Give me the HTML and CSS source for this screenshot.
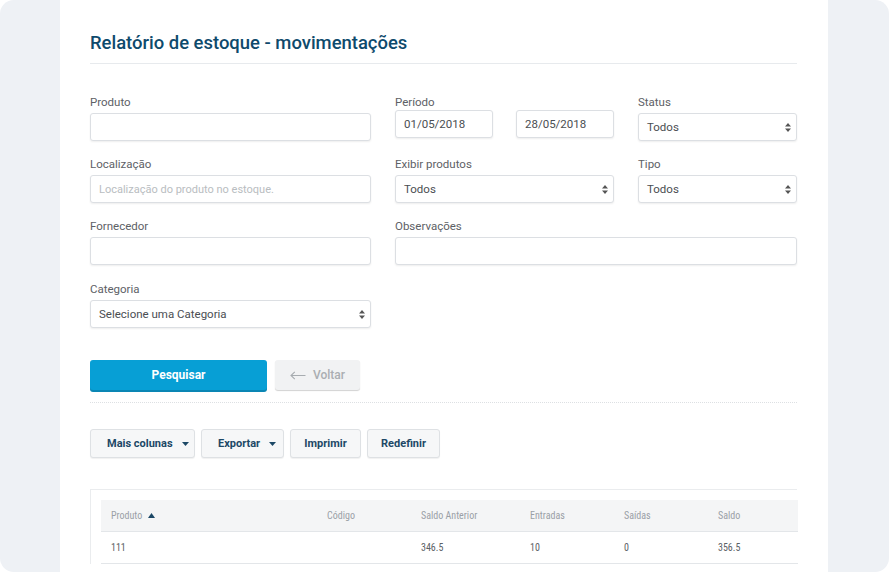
FILE: index.html
```html
<!DOCTYPE html>
<html lang="pt">
<head>
<meta charset="utf-8">
<title>Relatório de estoque - movimentações</title>
<link rel="stylesheet" href="styles.css">
</head>
<body>
<div class="frame">
  <main class="card">
    <h1 class="title">Relatório de estoque - movimentações</h1>
    <hr class="rule">

    <form class="form">
      <div class="field">
        <label class="label">Produto</label>
        <div class="input"></div>
      </div>
      <div class="field">
        <label class="label">Período</label>
        <div class="dates">
          <div class="input date">01/05/2018</div>
          <div class="input date">28/05/2018</div>
        </div>
      </div>
      <div class="field">
        <label class="label">Status</label>
        <div class="input select"><span>Todos</span><svg class="updown" width="6" height="9" viewBox="0 0 6 9"><path d="M3 0L6 3.6H0Z M3 9L0 5.4H6Z" fill="#555"/></svg></div>
      </div>

      <div class="field">
        <label class="label">Localização</label>
        <div class="input placeholder">Localização do produto no estoque.</div>
      </div>
      <div class="field">
        <label class="label">Exibir produtos</label>
        <div class="input select"><span>Todos</span><svg class="updown" width="6" height="9" viewBox="0 0 6 9"><path d="M3 0L6 3.6H0Z M3 9L0 5.4H6Z" fill="#555"/></svg></div>
      </div>
      <div class="field">
        <label class="label">Tipo</label>
        <div class="input select"><span>Todos</span><svg class="updown" width="6" height="9" viewBox="0 0 6 9"><path d="M3 0L6 3.6H0Z M3 9L0 5.4H6Z" fill="#555"/></svg></div>
      </div>

      <div class="field">
        <label class="label">Fornecedor</label>
        <div class="input"></div>
      </div>
      <div class="field wide">
        <label class="label">Observações</label>
        <div class="input"></div>
      </div>

      <div class="field last">
        <label class="label">Categoria</label>
        <div class="input select"><span>Selecione uma Categoria</span><svg class="updown" width="6" height="9" viewBox="0 0 6 9"><path d="M3 0L6 3.6H0Z M3 9L0 5.4H6Z" fill="#555"/></svg></div>
      </div>
    </form>

    <div class="actions">
      <button class="btn-primary" type="button">Pesquisar</button>
      <button class="btn-back" type="button"><svg width="16" height="9" viewBox="0 0 16 9"><path d="M15.5 4.5H1.2 M4.8 0.8L1 4.5L4.8 8.2" fill="none" stroke="#a7acb0" stroke-width="1.1"/></svg><span>Voltar</span></button>
    </div>

    <div class="dotted"></div>

    <div class="toolbar">
      <button class="tool" type="button">Mais colunas <svg class="caret" width="7" height="4" viewBox="0 0 7 4"><path d="M0 0H7L3.5 4Z" fill="#1c4866"/></svg></button>
      <button class="tool" type="button">Exportar <svg class="caret" width="7" height="4" viewBox="0 0 7 4"><path d="M0 0H7L3.5 4Z" fill="#1c4866"/></svg></button>
      <button class="tool" type="button">Imprimir</button>
      <button class="tool" type="button">Redefinir</button>
    </div>

    <div class="table-wrap">
      <table class="table">
        <colgroup>
          <col class="c1"><col class="c2"><col class="c3"><col class="c4"><col class="c5"><col class="c6">
        </colgroup>
        <thead>
          <tr>
            <th>Produto <svg class="sort" width="7" height="5" viewBox="0 0 7 5"><path d="M3.5 0L7 5H0Z" fill="#1c4866"/></svg></th>
            <th>Código</th>
            <th>Saldo Anterior</th>
            <th>Entradas</th>
            <th>Saídas</th>
            <th>Saldo</th>
          </tr>
        </thead>
        <tbody>
          <tr>
            <td>111</td>
            <td></td>
            <td>346.5</td>
            <td>10</td>
            <td>0</td>
            <td>356.5</td>
          </tr>
        </tbody>
      </table>
    </div>
  </main>
</div>
</body>
</html>
```

FILE: styles.css
```css
* { box-sizing: border-box; }

html, body {
  margin: 0;
  padding: 0;
  background: #ffffff;
}

body {
  font-family: Roboto, "Liberation Sans", Arial, sans-serif;
  width: 889px;
  height: 572px;
  overflow: hidden;
}

.frame {
  width: 889px;
  height: 572px;
  background: #eef1f5;
  border-radius: 14px;
  padding: 0 61px 0 60px;
  overflow: hidden;
}

.card {
  background: #ffffff;
  height: 572px;
  padding: 31px 31px 0 30px;
}

.title {
  margin: 0;
  font-size: 18.45px;
  line-height: 24px;
  font-weight: 500;
  color: #0e4a6c;
}

.rule {
  margin: 8px 0 0;
  border: 0;
  border-top: 1px solid #e7eaed;
  height: 0;
}

.form {
  margin-top: 30px;
  display: grid;
  grid-template-columns: 281px 219px 159px;
  column-gap: 24px;
  row-gap: 15px;
}

.field {
  display: flex;
  flex-direction: column;
}

.field.wide {
  grid-column: 2 / 4;
}

.field.last {
  margin-top: 1px;
}

.label {
  font-size: 11.5px;
  line-height: 16px;
  color: #5d6166;
  margin-bottom: 3px;
}

.input {
  height: 28px;
  border: 1px solid #dcdfe3;
  border-radius: 3px;
  background: #ffffff;
  box-shadow: 0 1px 2px rgba(0, 0, 0, 0.07);
  font-size: 11.5px;
  color: #4a4e52;
  padding: 0 8px;
  display: flex;
  align-items: center;
}

.placeholder {
  color: #b9bdc1;
  font-size: 11px;
}

.dates {
  display: flex;
  gap: 23px;
  margin-top: -3px;
}

.input.date {
  width: 98px;
}

.select {
  justify-content: space-between;
  padding-right: 5px;
}

.updown {
  flex: none;
}

.actions {
  margin-top: 32px;
  display: flex;
  gap: 8px;
}

.btn-primary {
  width: 177px;
  height: 30px;
  border: 0;
  border-radius: 3px;
  background: #079fd5;
  box-shadow: 0 2px 0 #0a86b4;
  color: #ffffff;
  font-family: Roboto, "Liberation Sans", Arial, sans-serif;
  font-weight: 700;
  font-size: 12px;
  padding: 0;
}

.btn-back {
  width: 85px;
  height: 30px;
  border: 0;
  border-radius: 3px;
  background: #f1f2f3;
  box-shadow: 0 1px 1px rgba(0, 0, 0, 0.18);
  color: #aaaeb2;
  font-family: Roboto, "Liberation Sans", Arial, sans-serif;
  font-weight: 500;
  font-size: 12px;
  display: flex;
  align-items: center;
  justify-content: center;
  gap: 7px;
  padding: 0;
}

.dotted {
  margin-top: 12px;
  border-top: 1px dotted #dde0e3;
  height: 0;
}

.toolbar {
  margin-top: 26px;
  display: flex;
  gap: 6px;
}

.tool {
  height: 29px;
  border: 1px solid #dee1e4;
  border-radius: 3px;
  background: #f6f7f8;
  box-shadow: 0 1px 1px rgba(0, 0, 0, 0.06);
  color: #1c4866;
  font-family: Roboto, "Liberation Sans", Arial, sans-serif;
  font-weight: 700;
  font-size: 11px;
  padding: 0 0 0 16px;
  display: flex;
  align-items: center;
  gap: 9px;
  white-space: nowrap;
}

.tool:nth-child(1) { width: 105px; }
.tool:nth-child(2) { width: 83px; }
.tool:nth-child(3) { width: 71px; justify-content: center; padding: 0; }
.tool:nth-child(4) { width: 73px; justify-content: center; padding: 0; }

.caret { flex: none; margin-top: 1px; }

.table-wrap {
  margin-top: 31px;
  border-top: 1px solid #eaecee;
  border-left: 1px solid #eaecee;
  padding: 10px 0 0 10px;
}

.table {
  width: 697px;
  border-collapse: collapse;
  table-layout: fixed;
  font-family: "Roboto Condensed", "DejaVu Sans Condensed", Roboto, sans-serif;
  font-size: 10px;
}

.c1 { width: 216px; }
.c2 { width: 94px; }
.c3 { width: 109px; }
.c4 { width: 94px; }
.c5 { width: 94px; }
.c6 { width: 90px; }

.table th {
  background: #f4f5f6;
  height: 31px;
  text-align: left;
  font-weight: 400;
  color: #9aa0a6;
  padding: 0 10px;
  border-bottom: 1px solid #e3e6e9;
}

.sort { margin-left: 4px; vertical-align: 1px; }

.table td {
  height: 32px;
  padding: 0 10px;
  color: #5c6166;
  border-bottom: 1px solid #e3e6e9;
}
```
